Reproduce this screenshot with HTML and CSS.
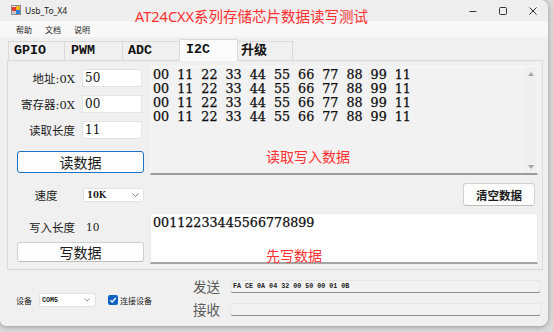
FILE: index.html
```html
<!DOCTYPE html>
<html lang="zh-CN">
<head>
    <meta charset="UTF-8">
    <title>Usb_To_X4</title>
    <link rel="stylesheet" href="styles.css">
</head>
<body>

    <div class="window">

        <!-- Title bar -->
        <div class="titlebar">
            <svg class="app-icon" width="10" height="10" viewBox="0 0 10 10">
                <rect x="0.5" y="0.5" width="9" height="9" fill="#f4f4f4" stroke="#8c8c8c"/>
                <rect x="1" y="2" width="4" height="4" fill="#e0392c"/>
                <rect x="5" y="1" width="4" height="4" fill="#f4b320"/>
                <rect x="5" y="5" width="4" height="4" fill="#2d7fd8"/>
                <rect x="1" y="6" width="4" height="3" fill="#c8c8c8"/>
            </svg>
            <span class="win-title">Usb_To_X4</span>
            <div class="controls">
                <span><svg width="8" height="8" viewBox="0 0 8 8"><line x1="0.5" y1="4.5" x2="7.5" y2="4.5" stroke="#333" stroke-width="1"/></svg></span>
                <span><svg width="8" height="8" viewBox="0 0 8 8"><rect x="0.5" y="0.5" width="7" height="7" rx="1" fill="none" stroke="#333" stroke-width="1"/></svg></span>
                <span><svg width="8" height="8" viewBox="0 0 8 8"><path d="M0.5 0.5 L7.5 7.5 M7.5 0.5 L0.5 7.5" stroke="#333" stroke-width="1"/></svg></span>
            </div>
        </div>

        <div class="heading">AT24CXX系列存储芯片数据读写测试</div>

        <!-- Menu -->
        <div class="menubar">
            <span>帮助</span>
            <span>文档</span>
            <span>说明</span>
        </div>

        <!-- Tabs -->
        <div class="tabs">
            <div class="tab">GPIO</div>
            <div class="tab">PWM</div>
            <div class="tab">ADC</div>
            <div class="tab active">I2C</div>
            <div class="tab">升级</div>
        </div>

        <div class="tab-panel">
            <div class="left-col">
                <div class="field">
                    <label>地址:0X</label>
                    <div class="input">50</div>
                </div>
                <div class="field">
                    <label>寄存器:0X</label>
                    <div class="input">00</div>
                </div>
                <div class="field">
                    <label>读取长度</label>
                    <div class="input">11</div>
                </div>
                <button class="btn btn-big btn-focus read-btn">读数据</button>
                <div class="field speed-row">
                    <label class="center">速度</label>
                    <div class="select">
                        <span>10K</span>
                        <svg width="7" height="4" viewBox="0 0 7 4"><polyline points="0.5,0.5 3.5,3.5 6.5,0.5" fill="none" stroke="#777" stroke-width="0.9"/></svg>
                    </div>
                </div>
                <div class="field len-row">
                    <label>写入长度</label>
                    <span class="value">10</span>
                </div>
                <button class="btn btn-big write-btn">写数据</button>
            </div>

            <div class="right-col">
                <div class="read-box">
                    <div class="hex">00 11 22 33 44 55 66 77 88 99 11
00 11 22 33 44 55 66 77 88 99 11
00 11 22 33 44 55 66 77 88 99 11
00 11 22 33 44 55 66 77 88 99 11</div>
                    <div class="scrollbar">
                        <svg width="6" height="4" viewBox="0 0 6 4"><polygon points="0,4 3,0 6,4" fill="#a6a6a6"/></svg>
                        <svg width="6" height="4" viewBox="0 0 6 4"><polygon points="0,0 3,4 6,0" fill="#a6a6a6"/></svg>
                    </div>
                    <span class="hint read-hint">读取写入数据</span>
                </div>
                <div class="clear-row">
                    <button class="btn clear-btn">清空数据</button>
                </div>
                <div class="write-box">
                    <div class="hex">00112233445566778899</div>
                    <span class="hint write-hint">先写数据</span>
                </div>
            </div>
        </div>

        <!-- Bottom bar -->
        <div class="statusbar">
            <div class="device">
                <span>设备</span>
                <div class="select small-select">
                    <span>COM5</span>
                    <svg width="6" height="4" viewBox="0 0 6 4"><polyline points="0.5,0.5 3,3 5.5,0.5" fill="none" stroke="#777" stroke-width="0.8"/></svg>
                </div>
                <span class="checkbox">
                    <svg width="10" height="10" viewBox="0 0 10 10"><polyline points="2.3,5.2 4.2,7 7.8,3" fill="none" stroke="#fff" stroke-width="1.3"/></svg>
                </span>
                <span>连接设备</span>
            </div>
            <div class="io">
                <span class="io-label">发送</span>
                <div class="io-box">FA CE 0A 04 32 00 50 00 01 0B</div>
                <span class="io-label">接收</span>
                <div class="io-box"></div>
            </div>
        </div>

    </div>

</body>
</html>
```

FILE: styles.css
```css
* {
    box-sizing: border-box;
}

body {
    margin: 0;
    width: 553px;
    height: 332px;
    overflow: hidden;
    background-color: #d9d9d9;
    font-family: "Noto Sans", "Noto Sans CJK SC", sans-serif;
}

/* Window frame */
.window {
    position: relative;
    width: 548px;
    height: 326px;
    background-color: #f0f0f0;
    border-radius: 0 8px 8px 6px;
    box-shadow: 0 1px 5px rgba(0, 0, 0, 0.3);
    overflow: hidden;
    display: flex;
    flex-direction: column;
}

.titlebar {
    height: 21px;
    background-color: #eeeeee;
    display: flex;
    align-items: center;
    padding-left: 11px;
}

.app-icon {
    margin-top: -1px;
}

.win-title {
    font-size: 8.5px;
    color: #1a1a1a;
    margin-left: 4px;
}

.controls {
    margin-left: auto;
    display: flex;
}

.controls span {
    width: 30px;
    height: 21px;
    display: flex;
    align-items: center;
    justify-content: center;
}

/* Red label drawn over the caption area */
.heading {
    position: absolute;
    left: 135px;
    top: 8px;
    font-size: 14.5px;
    line-height: 16px;
    color: #ff3030;
}

.menubar {
    height: 16px;
    background-color: #f8f8f8;
    display: flex;
    align-items: center;
    gap: 13px;
    padding-left: 16px;
    font-size: 8px;
    color: #1a1a1a;
}

/* Tab strip */
.tabs {
    height: 23px;
    display: flex;
    align-items: flex-end;
    padding-left: 8px;
}

.tab {
    height: 19px;
    margin-right: -1px;
    padding-left: 5px;
    border: 1px solid #d9d9d9;
    border-bottom: none;
    background-color: #f0f0f0;
    font: bold 13.3px "Liberation Mono", "Noto Sans CJK SC", monospace;
    line-height: 18px;
    color: #111;
}

.tab:nth-child(1) { width: 57px; }
.tab:nth-child(2) { width: 59px; padding-left: 6px; }
.tab:nth-child(3) { width: 58px; }
.tab:nth-child(4) { width: 59px; padding-left: 6px; }
.tab:nth-child(5) { width: 56px; padding-left: 3px; font-size: 13px; }

.tab.active {
    height: 22px;
    margin-bottom: -1px;
    background-color: #fbfbfb;
    position: relative;
    z-index: 1;
    line-height: 20px;
}

.tab-panel {
    width: 536px;
    height: 210px;
    margin-left: 7px;
    border: 1px solid #d9d9d9;
    display: flex;
    gap: 6px;
    padding: 5px 4px 0 9px;
    font-family: "DejaVu Serif", "Noto Sans CJK SC", serif;
    color: #1a1a1a;
}

/* Left column */
.left-col {
    width: 127px;
    display: flex;
    flex-direction: column;
    padding-top: 3px;
}

.field {
    display: flex;
    align-items: center;
    height: 18px;
}

.field + .field {
    margin-top: 8px;
}

.field label {
    width: 58px;
    margin-right: 7px;
    text-align: right;
    font-size: 11.5px;
    white-space: nowrap;
}

.field label.center {
    text-align: center;
    margin-right: 8px;
}

.input {
    width: 60px;
    height: 18px;
    background-color: #fff;
    border: 1px solid #e4e4e4;
    padding-left: 2px;
    font-size: 12px;
    line-height: 16px;
    color: #111;
}

.btn {
    background-color: #fdfdfd;
    border: 1px solid #d0d0d0;
    border-bottom-color: #bdbdbd;
    border-radius: 3px;
    font-family: "Noto Sans CJK SC", sans-serif;
    color: #1b1b1b;
    padding: 0;
    cursor: pointer;
}

.btn-big {
    width: 127px;
    font-size: 14px;
}

.btn-focus {
    border: 1px solid #1a72c9;
}

.read-btn {
    height: 22px;
    margin-top: 12px;
    line-height: 19px;
}

.field.speed-row {
    height: 14px;
    margin-top: 15px;
}

.select {
    width: 61px;
    height: 14px;
    background-color: #fff;
    border: 1px solid #e2e2e2;
    border-radius: 2px;
    display: flex;
    align-items: center;
    justify-content: space-between;
    padding: 0 4px 0 3px;
    font-weight: bold;
    font-size: 8.5px;
}

.field.len-row {
    margin-top: 16px;
}

.value {
    padding-left: 4px;
    font-size: 10.5px;
}

.write-btn {
    height: 20px;
    margin-top: 6px;
    line-height: 17px;
}

/* Right column */
.right-col {
    width: 388px;
    display: flex;
    flex-direction: column;
}

.read-box {
    position: relative;
    height: 109px;
    background-color: #f2f2f2;
    border: 1px solid #f9f9f9;
    border-bottom: 2px solid #9c9c9c;
    display: flex;
}

.hex {
    flex: 1;
    white-space: pre;
    font: 12.7px "DejaVu Serif", serif;
    word-spacing: 4px;
    line-height: 14px;
    padding: 1px 0 0 2px;
    color: #0d0d0d;
    -webkit-text-stroke: 0.25px #0d0d0d;
}

.scrollbar {
    width: 12px;
    display: flex;
    flex-direction: column;
    justify-content: space-between;
    align-items: center;
    padding: 5px 0 4px;
    background-color: #efefef;
}

.hint {
    position: absolute;
    left: 115px;
    font-family: "Noto Sans CJK SC", sans-serif;
    font-size: 14px;
    line-height: 16px;
    color: #ff3030;
}

.read-hint {
    top: 81px;
}

.clear-row {
    display: flex;
    justify-content: flex-end;
    padding-right: 3px;
    margin-top: 8px;
}

.clear-btn {
    width: 72px;
    height: 23px;
    font-size: 11.5px;
    font-weight: bold;
}

.write-box {
    position: relative;
    height: 51px;
    margin-top: 7px;
    background-color: #fff;
    border: 1px solid #ececec;
    border-bottom: 2px solid #a4a4a4;
}

.write-box .hex {
    padding-top: 2px;
}

.write-hint {
    top: 33px;
}

/* Bottom bar */
.statusbar {
    flex: 1;
    display: flex;
    gap: 41px;
    padding: 0 7px 0 16px;
    font-family: "Liberation Mono", "Noto Sans CJK SC", monospace;
}

.device {
    width: 136px;
    height: 14px;
    margin-top: 23px;
    display: flex;
    align-items: center;
    font-size: 8px;
    color: #1a1a1a;
}

.small-select {
    width: 57px;
    margin: 0 12px 0 7px;
    font-size: 6.7px;
    padding: 0 5px 0 2px;
}

.checkbox {
    width: 10px;
    height: 10px;
    margin-right: 2px;
    border-radius: 2px;
    background-color: #0a63c4;
    display: flex;
}

.io {
    flex: 1;
    display: grid;
    grid-template-columns: 27px 1fr;
    grid-auto-rows: 13px;
    column-gap: 10px;
    row-gap: 10px;
    padding-top: 10px;
}

.io-label {
    font-family: "Noto Sans CJK SC", sans-serif;
    font-size: 13.5px;
    line-height: 13px;
    color: #5a5a5a;
}

.io-box {
    background-color: #f2f2f2;
    border: 1px solid #e6e6e6;
    border-bottom-color: #8f8f8f;
    border-radius: 3px;
    padding-left: 2px;
    font-size: 6.7px;
    font-weight: bold;
    line-height: 11px;
    color: #222;
}
```
